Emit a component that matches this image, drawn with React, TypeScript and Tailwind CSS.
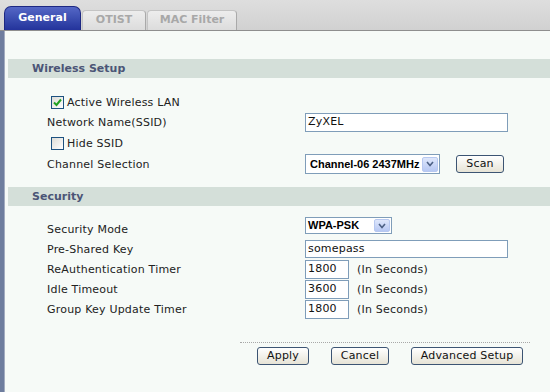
const font = "font-['DejaVu_Sans',Verdana,sans-serif]";
const arial = "font-['Liberation_Sans',Arial,sans-serif]";

const Check = ({ checked }: { checked?: boolean }) => (
  <span className="w-[13px] h-[13px] border border-[#1c5180] bg-gradient-to-br from-[#dcdcd7] to-white flex items-center justify-center">
    {checked && (
      <svg width="9" height="9" viewBox="0 0 9 9">
        <path d="M1 4.5 L3.5 7 L8 1.5" stroke="#21a121" strokeWidth="2" fill="none" />
      </svg>
    )}
  </span>
);

const Arrow = ({ h }: { h: string }) => (
  <span className={`w-[16px] ${h} mr-[1px] rounded-[2px] border border-[#b7c8f0] bg-gradient-to-b from-[#dfe7fb] to-[#b7c8f3] flex items-center justify-center`}>
    <svg width="8" height="6" viewBox="0 0 8 6">
      <path d="M1 1 L4 4.5 L7 1" stroke="#4d6185" strokeWidth="1.6" fill="none" />
    </svg>
  </span>
);

const Btn = ({ label, w }: { label: string; w: string }) => (
  <div
    className={`${w} h-[18px] rounded-[3px] border border-[#3c5473] bg-gradient-to-b from-white to-[#e6e3d6] flex items-center justify-center text-[11px] text-[#111]`}
  >
    {label}
  </div>
);

const Row = ({ label, h, children }: { label: React.ReactNode; h: string; children?: React.ReactNode }) => (
  <div className={`flex items-center ${h}`}>
    <div className="w-[300px] pl-[42px] pt-[2px]">{label}</div>
    {children}
  </div>
);

const Header = ({ title, mt }: { title: string; mt: string }) => (
  <div className={`${mt} ml-[3px] h-[19px] bg-[#d4dfd9] flex items-center pl-[24px] pt-[2px] font-bold tracking-normal text-[11px] text-[#4b5576]`}>
    {title}
  </div>
);

const SecInput = ({ value }: { value: string }) => (
  <div className="flex items-center">
    <div className="w-[44px] h-[19px] border border-[#7f9db9] bg-white flex items-center pl-[2px] text-[11px] text-[#111]">
      {value}
    </div>
    <span className="ml-[8px] pt-[2px] text-[11px] text-[#222]">(In Seconds)</span>
  </div>
);

export default function App() {
  return (
    <div className={`${font} w-[550px] h-[392px] overflow-hidden bg-[#f6faf7] text-[#222] text-[11px] tracking-[0.2px]`}>
      <div className="h-[31px] bg-gradient-to-b from-[#dedede] to-[#d1d1d1] border-b border-[#8e8e8e] flex items-end pl-[4px] gap-[1px] tracking-normal">
        <div className="w-[77px] h-[24px] rounded-t-[7px] border border-b-0 border-[#1d2883] bg-gradient-to-b from-[#5567c6] to-[#24339b] flex items-center justify-center text-white font-bold text-[11px]">
          General
        </div>
        <div className="w-[64px] h-[20px] rounded-t-[4px] border border-b-0 border-[#c4c4c4] border-r-[#a9a9a9] bg-gradient-to-b from-[#ededed] to-[#dcdcdc] flex items-center justify-center text-[#a8a8a8] font-bold text-[11px]">
          OTIST
        </div>
        <div className="w-[90px] h-[20px] rounded-t-[4px] border border-b-0 border-[#c4c4c4] border-r-[#a9a9a9] bg-gradient-to-b from-[#ededed] to-[#dcdcdc] flex items-center justify-center text-[#a8a8a8] font-bold text-[11px]">
          MAC Filter
        </div>
      </div>
      <div className="flex h-[361px]">
        <div className="w-[5px] bg-[#6e7d9e] border-r border-[#a3acc0]" />
        <div className="flex-1 flex flex-col">
          <Header title="Wireless Setup" mt="mt-[28px]" />
          <div className="mt-[14px] h-[20px] flex items-center pl-[46px] gap-[3px]">
            <Check checked />
            <span className="pt-[2px]">Active Wireless LAN</span>
          </div>
          <Row label="Network Name(SSID)" h="h-[21px]">
            <div className="w-[203px] h-[19px] border border-[#7f9db9] bg-white flex items-center pl-[2px] text-[#111]">ZyXEL</div>
          </Row>
          <div className="h-[21px] flex items-center pl-[46px] gap-[3px]">
            <Check />
            <span className="pt-[2px]">Hide SSID</span>
          </div>
          <Row label="Channel Selection" h="h-[20px]">
            <div className="w-[135px] h-[20px] border border-[#7f9db9] bg-white flex items-center justify-between pl-[4px]">
              <span className={`${arial} font-bold text-[11px] text-black tracking-normal`}>Channel-06 2437MHz</span>
              <Arrow h="h-[15px]" />
            </div>
            <div className="ml-[16px]">
              <Btn label="Scan" w="w-[48px]" />
            </div>
          </Row>
          <Header title="Security" mt="mt-[13px]" />
          <div className="mt-[13px]">
            <Row label="Security Mode" h="h-[20px]">
              <div className="self-start -mt-[2px] w-[87px] h-[17px] border border-[#7f9db9] bg-white flex items-center justify-between pl-[2px]">
                <span className={`${arial} font-bold text-[11px] text-black tracking-normal`}>WPA-PSK</span>
                <Arrow h="h-[13px]" />
              </div>
            </Row>
            <Row label="Pre-Shared Key" h="h-[20px]">
              <div className="w-[203px] h-[18px] border border-[#7f9db9] bg-white flex items-center pl-[2px] text-[#111]">somepass</div>
            </Row>
            <Row label="ReAuthentication Timer" h="h-[20px]">
              <SecInput value="1800" />
            </Row>
            <Row label="Idle Timeout" h="h-[20px]">
              <SecInput value="3600" />
            </Row>
            <Row label="Group Key Update Timer" h="h-[20px]">
              <SecInput value="1800" />
            </Row>
          </div>
          <div className="mt-[23px] ml-[235px] w-[290px] border-t border-dotted border-[#a8a8a8] pt-[4px] flex pl-[17px]">
            <Btn label="Apply" w="w-[52px]" />
            <div className="ml-[22px]">
              <Btn label="Cancel" w="w-[58px]" />
            </div>
            <div className="ml-[22px]">
              <Btn label="Advanced Setup" w="w-[112px]" />
            </div>
          </div>
        </div>
      </div>
    </div>
  );
}
